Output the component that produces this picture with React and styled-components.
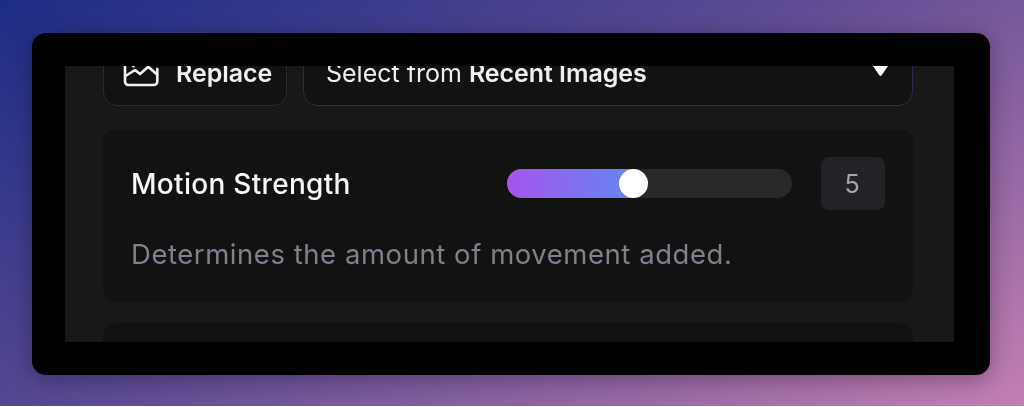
import React from "react";
import styled, { createGlobalStyle } from "styled-components";

const Global = createGlobalStyle`
  html, body { margin: 0; padding: 0; width: 1024px; height: 407px; overflow: hidden; background: #fff; }
  body { font-family: Inter, "Liberation Sans", sans-serif; font-optical-sizing: none; }
`;

const Backdrop = styled.div`
  box-sizing: border-box;
  width: 1024px;
  height: 406px;
  padding: 33px 34px 31px 32px;
  background: linear-gradient(150deg, #1c2c85 0%, #5b4a93 45%, #c47fb2 100%);
`;

const Frame = styled.div`
  box-sizing: border-box;
  height: 342px;
  padding: 33px 36px 33px 33px;
  background: #000;
  border-radius: 14px;
  box-shadow: 0 4px 22px rgba(0, 0, 0, 0.32);
`;

const Viewport = styled.div`
  height: 276px;
  overflow: hidden;
  background: #181818;
  filter: blur(0.45px);
`;

const Content = styled.div`
  display: flex;
  flex-direction: column;
  gap: 21px;
  margin-top: -24px;
  padding: 0 41px 0 38px;
`;

const SourceRow = styled.div`
  display: flex;
  gap: 16px;
  height: 64px;
  margin-bottom: 2px;
`;

const SourceButton = styled.div`
  box-sizing: border-box;
  display: flex;
  align-items: center;
  justify-content: ${(p) => (p.$wide ? "space-between" : "flex-start")};
  flex: ${(p) => (p.$wide ? "1" : "0 0 184px")};
  padding: ${(p) => (p.$wide ? "0 23px 3px 22px" : "0 0 3px 19px")};
  gap: 17px;
  background: #121212;
  border: 1.5px solid ${(p) => (p.$wide ? "#2e2f4a" : "#2a2a33")};
  border-radius: 14px;
  color: #efeff1;
  font-size: 25px;
`;

const Strong = styled.b`
  font-weight: 600;
  letter-spacing: -0.05px;
`;

const IconSvg = styled.svg`
  width: 36px;
  height: 32px;
  flex: none;
  margin-top: -3px;
`;

const Caret = styled.svg`
  width: 17px;
  height: 14px;
  margin-top: -4px;
`;

const Card = styled.section`
  box-sizing: border-box;
  height: ${(p) => p.$height}px;
  padding: 28px 28px 0;
  background: #121212;
  border-radius: 13px;
`;

const CardRow = styled.div`
  display: flex;
  align-items: center;
  height: 53px;
`;

const Label = styled.div`
  flex: 1;
  color: #f7f7f8;
  font-size: 28px;
  font-weight: 500;
  letter-spacing: 0.3px;
`;

const Track = styled.div`
  position: relative;
  width: 285px;
  height: 29px;
  border-radius: 15px;
  background: #292929;
`;

const Fill = styled.div`
  width: 45%;
  height: 100%;
  border-radius: 15px 0 0 15px;
  background: linear-gradient(90deg, #a455ec, #6586f3);
`;

const Thumb = styled.div`
  position: absolute;
  top: 0;
  left: 112px;
  width: 29px;
  height: 29px;
  border-radius: 50%;
  background: #fff;
`;

const Value = styled.div`
  display: flex;
  align-items: center;
  justify-content: center;
  width: 64px;
  height: 53px;
  margin-left: 29px;
  padding-right: 2px;
  box-sizing: border-box;
  border-radius: 8px;
  background: #232327;
  color: #a6a6aa;
  font-size: 25px;
`;

const Hint = styled.p`
  margin: 28px 0 0;
  color: #81818e;
  font-size: 27.5px;
  line-height: 32px;
  letter-spacing: 0.55px;
`;

function LandscapeIcon() {
  return (
    <IconSvg viewBox="0 0 36 32" fill="none" stroke="#f2f2f3" strokeWidth="2.6" strokeLinecap="round" strokeLinejoin="round">
      <path d="M2 8v18.5a3.5 3.5 0 0 0 3.5 3.5h25.3a3.5 3.5 0 0 0 3.5-3.5V14" />
      <path d="M2.5 21 12 15l5 4 8.3-7.3L34 19.5" />
      <path d="M10.3 11.3h.2" />
    </IconSvg>
  );
}

export default function App() {
  return (
    <>
      <Global />
      <Backdrop>
        <Frame>
          <Viewport>
            <Content>
              <SourceRow>
                <SourceButton>
                  <LandscapeIcon />
                  <Strong>Replace</Strong>
                </SourceButton>
                <SourceButton $wide>
                  <span>
                    Select from <Strong>Recent Images</Strong>
                  </span>
                  <Caret viewBox="0 0 16 14">
                    <path d="M1 0h14a1 1 0 0 1 .8 1.6l-6.6 9.6a1.4 1.4 0 0 1-2.4 0L.2 1.6A1 1 0 0 1 1 0z" fill="#fff" />
                  </Caret>
                </SourceButton>
              </SourceRow>
              <Card $height={173}>
                <CardRow>
                  <Label>Motion Strength</Label>
                  <Track>
                    <Fill />
                    <Thumb />
                  </Track>
                  <Value>5</Value>
                </CardRow>
                <Hint>Determines the amount of movement added.</Hint>
              </Card>
              <Card $height={80} />
            </Content>
          </Viewport>
        </Frame>
      </Backdrop>
    </>
  );
}
